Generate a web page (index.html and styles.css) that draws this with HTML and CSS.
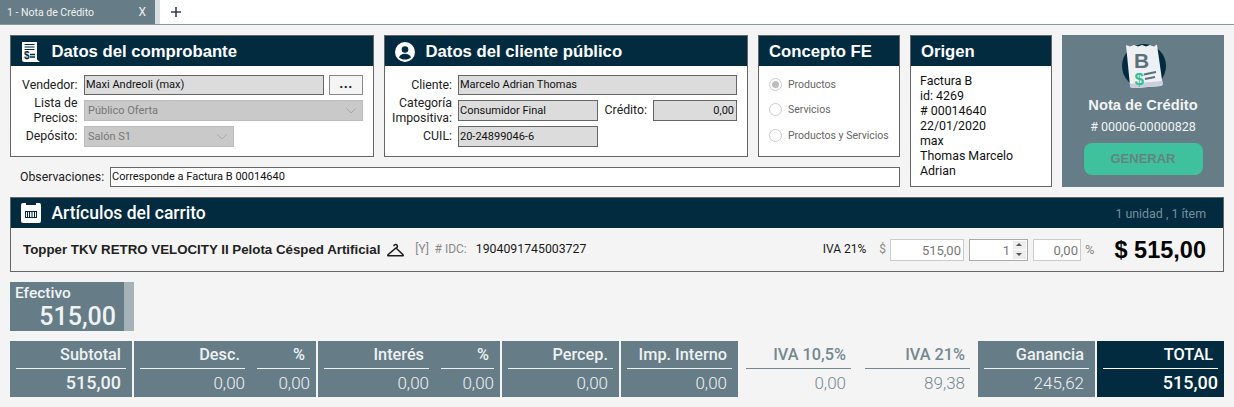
FILE: index.html
```html
<!DOCTYPE html>
<html lang="es">
<head>
<meta charset="utf-8">
<title>Nota de Crédito</title>
<link rel="stylesheet" href="styles.css">
</head>
<body>
<nav class="tabbar">
  <div class="tab"><span>1 - Nota de Crédito</span><span class="tab-x">X</span></div>
  <div class="tab-edge"></div>
  <svg class="tab-plus" width="10" height="10" viewBox="0 0 10 10"><path d="M5 0v10M0 5h10" stroke="#33424a" stroke-width="1.6"/></svg>
</nav>
<main class="page">
  <section class="top">
    <div class="panel p-comp">
      <header class="phead">
        <svg class="hicon" width="20" height="20" viewBox="0 0 20 20"><path d="M1 0h15v17.5l3 2.5H3.500Q1 20 1 17.500z" fill="#fff"/><path d="M3.500 2.500h10M3.500 5h10M3.500 7.500h10" stroke="#022b40" stroke-width="1.200"/><text x="3" y="17" class="icon-dollar">$</text><path d="M9 12.500h5M9 15h5" stroke="#022b40" stroke-width="1.500"/></svg>
        <h2>Datos del comprobante</h2>
      </header>
      <div class="form form-comp">
        <label>Vendedor:</label>
        <div class="field">Maxi Andreoli (max)</div>
        <button class="dots">...</button>
        <label class="two">Lista de Precios:</label>
        <div class="select wide">Público Oferta<svg width="10" height="6" viewBox="0 0 10 6"><path d="M.5.500 5 5 9.500.500" fill="none" stroke="#a8a8a8"/></svg></div>
        <label>Depósito:</label>
        <div class="select short">Salón S1<svg width="10" height="6" viewBox="0 0 10 6"><path d="M.5.500 5 5 9.500.500" fill="none" stroke="#a8a8a8"/></svg></div>
      </div>
    </div>
    <div class="panel p-client">
      <header class="phead">
        <svg class="hicon" width="20" height="20" viewBox="0 0 20 20"><circle cx="10" cy="10" r="10" fill="#fff"/><circle cx="10" cy="7.500" r="3.300" fill="#022b40"/><path d="M4 15.500c.8-2.600 3-3.700 6-3.700s5.200 1.100 6 3.700c-1.500 1.300-3.600 2.100-6 2.100s-4.500-.8-6-2.100z" fill="#022b40"/></svg>
        <h2>Datos del cliente público</h2>
      </header>
      <div class="form form-client">
        <label>Cliente:</label>
        <div class="field span3">Marcelo Adrian Thomas</div>
        <label class="two">Categoría Impositiva:</label>
        <div class="field tall">Consumidor Final</div>
        <label>Crédito:</label>
        <div class="field tall right">0,00</div>
        <label>CUIL:</label>
        <div class="field tall">20-24899046-6</div>
      </div>
    </div>
    <div class="panel p-concept">
      <header class="phead"><h2>Concepto FE</h2></header>
      <ul class="radios">
        <li><span class="radio on"></span>Productos</li>
        <li><span class="radio"></span>Servicios</li>
        <li><span class="radio"></span>Productos y Servicios</li>
      </ul>
    </div>
    <div class="panel p-origin">
      <header class="phead"><h2>Origen</h2></header>
      <div class="origin">Factura B<br>id: 4269<br># 00014640<br>22/01/2020<br>max<br>Thomas Marcelo<br>Adrian</div>
    </div>
    <aside class="p-nota">
      <svg class="nota-icon" width="44" height="44" viewBox="0 0 44 44">
        <circle cx="22" cy="22" r="22" fill="#022b40"/>
        <path d="M4 1l4 1.500 4-1.500 4 1.500 4-1.500 4 1.500 4-1.500 4 1.500 3-2 5.500 39q.5 2-2 2.500l-27 2.500q-3 .5-3.500-3z" fill="#eef1f4"/>
        <path d="M7.800 38q1 2 3 1.700l29.500-2.700.7 3q.3 1.500-2 2l-28 2.500q-2.500 0-3-3z" fill="#c9cfdc"/>
        <text x="12" y="24" class="nota-b">B</text>
        <text x="12.500" y="41" class="nota-s">$</text>
        <path d="M22 30.500l12-2.500M23 35l10-2" stroke="#5d7079" stroke-width="2.200"/>
      </svg>
      <div class="nota-title">Nota de Crédito</div>
      <div class="nota-num"># 00006-00000828</div>
      <button class="gen">GENERAR</button>
    </aside>
    <div class="obs">
      <label>Observaciones:</label>
      <div class="obs-input">Corresponde a Factura B 00014640</div>
    </div>
  </section>

  <section class="cart">
    <header class="cart-head">
      <svg class="hicon" width="20" height="20" viewBox="0 0 20 20"><path d="M2 0h3v2h10V0h3q2 0 2 2v16q0 2-2 2H2q-2 0-2-2V2q0-2 2-2z" fill="#fff"/><path d="M4 8h12v7H4z" fill="#022b40"/><path d="M5.500 9v5M7.500 9v5M9.500 9v5M11 9v5M12.500 9v5M14.500 9v5" stroke="#fff"/></svg>
      <h2>Artículos del carrito</h2>
      <span class="cart-count">1 unidad , 1 ítem</span>
    </header>
    <div class="cart-row">
      <strong class="item-name">Topper TKV RETRO VELOCITY II Pelota Césped Artificial</strong>
      <svg class="hanger" width="17" height="14" viewBox="0 0 17 14"><path d="M6.800 3.200A1.800 1.800 0 1 1 9 5L1 11.800q-.6 1 .5 1h14q1.100 0 .5-1L9 5" fill="none" stroke="#1c1c1c" stroke-width="1.500"/></svg>
      <span class="muted tag">[Y]</span>
      <span class="muted idc"># IDC:</span>
      <span class="idcode">1904091745003727</span>
      <span class="iva">IVA 21%</span>
      <span class="muted sym">$</span>
      <div class="num w-price">515,00</div>
      <div class="stepper"><span class="step-val">1</span><span class="step-btns"><i class="up"></i><i class="down"></i></span></div>
      <div class="num w-pct">0,00</div>
      <span class="muted pct">%</span>
      <strong class="line-total">$ 515,00</strong>
    </div>
  </section>

  <section class="pay">
    <div class="pay-main"><div class="pay-label">Efectivo</div><div class="pay-val">515,00</div></div>
    <div class="pay-bar"></div>
  </section>

  <section class="totals">
    <div class="tcell w-122 padv"><div class="tcol grow"><b>Subtotal</b><strong>515,00</strong></div></div>
    <div class="tcell w-182"><div class="tcol grow"><b>Desc.</b><span>0,00</span></div><div class="tcol w53"><b>%</b><span>0,00</span></div></div>
    <div class="tcell w-182"><div class="tcol grow"><b>Interés</b><span>0,00</span></div><div class="tcol w53"><b>%</b><span>0,00</span></div></div>
    <div class="tcell w-117 padv"><div class="tcol grow"><b>Percep.</b><span>0,00</span></div></div>
    <div class="tcell w-117 padv"><div class="tcol grow"><b>Imp. Interno</b><span>0,00</span></div></div>
    <div class="tcell w-117 plain padv"><div class="tcol grow"><b>IVA 10,5%</b><span>0,00</span></div></div>
    <div class="tcell w-117 plain padv"><div class="tcol grow"><b>IVA 21%</b><span>89,38</span></div></div>
    <div class="tcell w-117 padv"><div class="tcol grow"><b>Ganancia</b><span>245,62</span></div></div>
    <div class="tcell w-127 dark"><div class="tcol grow"><b>TOTAL</b><strong>515,00</strong></div></div>
  </section>
</main>
</body>
</html>
```
FILE: styles.css
```css
* { box-sizing: border-box; }
html, body { margin: 0; padding: 0; }
body { width: 1234px; height: 407px; overflow: hidden; background: #f4f4f4; font: 12px/15px Roboto, "Liberation Sans", sans-serif; color: #1a1a1a; }

.tabbar { height: 25px; background: #fff; border-bottom: 1px solid #8b989e; display: flex; align-items: center; }
.tab { width: 155px; height: 24px; background: #667c86; color: #eef1f2; display: flex; align-items: center; justify-content: space-between; padding: 0 9px 0 7px; font-size: 10.500px; }
.tab-x { font-size: 12px; }
.tab-edge { width: 5px; height: 24px; background: #d8dee1; }
.tab-plus { margin-left: 11px; }

.page { padding: 10px 10px 0; }
.top { display: grid; grid-template-columns: 364px 364px 142px 142px 162px; grid-template-rows: 122px 20px; column-gap: 10px; row-gap: 10px; }
.panel { border: 1px solid #666; background: #fff; }
.p-comp { grid-column: 1; grid-row: 1; }
.p-client { grid-column: 2; grid-row: 1; }
.p-concept { grid-column: 3; grid-row: 1; }
.p-origin { grid-column: 4; grid-row: 1 / span 2; }
.p-nota { grid-column: 5; grid-row: 1 / span 2; }
.phead { height: 30px; background: #022b40; color: #fff; display: flex; align-items: center; padding: 1px 0 0 10px; }
.phead h2 { margin: 0; font: 700 16.700px/22px "Liberation Sans", Arial, sans-serif; white-space: nowrap; }
.hicon { flex: none; margin-right: 10.500px; }

.form { display: grid; column-gap: 5px; row-gap: 5px; padding-top: 9px; align-items: center; }
.form-comp { grid-template-columns: 68px 240px 34px; grid-template-rows: 20px 21px 21px; }
.form-client { grid-template-columns: 68px 140px 45px 84px; grid-template-rows: 20px 21px 21px; }
.form label { text-align: right; padding-right: 1.500px; color: #222; font-size: 12.300px; white-space: normal; }
.form-client label { padding-right: 1px; }
.form .two { line-height: 15px; }
.field { height: 100%; background: #dcdcdc; border: 1px solid #666; padding: 1px 1px; font-size: 11px; line-height: 15px; color: #111; white-space: nowrap; }
.tall { padding-top: 2px; }
.right { text-align: right; padding-right: 2px; }
.span3 { grid-column: 2 / span 3; }
.dots { height: 20px; padding: 0 0 5px; background: #f4f4f4; border: 1px solid #888; font: 700 14px/14px Roboto, sans-serif; color: #222; letter-spacing: .5px; }
.select { height: 100%; background: #c9c9c9; border: 1px solid #bcbcbc; color: #777; font-size: 11px; padding: 3px 6px 3px 3px; display: flex; justify-content: space-between; align-items: center; }
.wide { grid-column: 2 / span 2; }
.short { width: 150px; }

.radios { list-style: none; margin: 0; padding: 6px 0 0 10px; color: #666; font-size: 10.500px; }
.radios li { height: 25.300px; display: flex; align-items: center; white-space: nowrap; }
.radio { width: 13px; height: 13px; border: 1px solid #ccc; border-radius: 50%; background: #fff; margin-right: 6px; position: relative; flex: none; }
.radio.on::after { content: ""; position: absolute; left: 2px; top: 2px; width: 7px; height: 7px; border-radius: 50%; background: #bdbdbd; }

.origin { padding: 7px 9px 0; color: #111; font-size: 12.400px; }

.p-nota { background: #667c86; display: flex; flex-direction: column; align-items: center; padding-top: 9px; color: #fff; }
.nota-icon { flex: none; margin-left: 1px; }
.icon-dollar { font: 700 10px "Liberation Sans", sans-serif; fill: #022b40; }
.nota-b { font: 700 21px "Liberation Sans", sans-serif; fill: #5d7079; }
.nota-s { font: 700 17px "Liberation Sans", sans-serif; fill: #37bd94; }
.nota-title { margin-top: 8px; font: 700 14.700px/18px "Liberation Sans", sans-serif; color: #f2f4f5; }
.nota-num { margin-top: 5px; font-size: 12.500px; line-height: 15px; color: #f2f4f5; }
.gen { margin-top: 9px; width: 119px; height: 32px; border: 0; border-radius: 8px; background: #3fc19e; color: #64847f; font: 700 13px/16px "Liberation Sans", sans-serif; }

.obs { grid-column: 1 / span 3; grid-row: 2; display: flex; align-items: center; padding-left: 10px; }
.obs label { width: 90px; flex: none; color: #222; font-size: 12.300px; white-space: nowrap; }
.obs-input { flex: 1; height: 20px; background: #fff; border: 1px solid #666; padding: 1px 1px; color: #111; font-size: 11px; }

.cart { margin-top: 10px; border: 1px solid #666; }
.cart-head { height: 30px; background: #022b40; color: #fff; display: flex; align-items: center; padding-left: 10px; }
.cart-head h2 { margin: 0; font: 500 17.500px/22px Roboto, sans-serif; }
.cart-count { margin-left: auto; margin-right: 17px; color: #76909c; font-size: 12.400px; }
.cart-row { height: 43px; display: flex; align-items: center; padding-left: 12px; }
.item-name { font: 700 13.300px/15px "Liberation Sans", sans-serif; color: #222; white-space: nowrap; }
.hanger { margin-left: 7px; flex: none; }
.muted { color: #8a8a8a; }
.tag { margin-left: 11px; }
.idc { margin-left: 5.500px; }
.idcode { margin-left: 9px; font-size: 12.300px; }
.iva { margin-left: auto; }
.sym { margin-left: 13px; }
.num { height: 22px; background: #fff; border: 1px solid #ccc; text-align: right; padding: 3px 2px; color: #777; font-size: 13px; }
.w-price { width: 74px; margin-left: 4px; }
.stepper { width: 59px; height: 22px; margin-left: 5px; background: #fff; border: 1px solid #aaa; display: flex; justify-content: flex-end; color: #777; font-size: 13px; }
.step-val { padding: 3px 2px 0 0; }
.step-btns { width: 15px; display: flex; flex-direction: column; gap: 1px; padding: 1px; }
.step-btns i { flex: 1; background: #ededed; position: relative; display: flex; align-items: center; justify-content: center; }
.step-btns i::after { content: ""; border-left: 3px solid transparent; border-right: 3px solid transparent; }
.up::after { border-bottom: 3px solid #555; }
.down::after { border-top: 3px solid #555; }
.w-pct { width: 48px; margin-left: 5px; }
.pct { margin-left: 4px; font-size: 13px; }
.line-total { margin-left: 20px; margin-right: 17px; font: 700 23.500px/26px "Liberation Sans", sans-serif; color: #050505; }

.pay { margin-top: 10px; height: 49px; width: 124px; display: flex; }
.pay-main { width: 114px; flex: none; background: #667c86; color: #f0f3f4; padding: 3px 8px 0 5px; }
.pay-label { font: 500 15.500px/16px Roboto, sans-serif; }
.pay-val { margin-top: 1px; text-align: right; font: 500 25px/29px Roboto, sans-serif; }
.pay-bar { width: 10px; flex: none; background: #a5b2b8; }

.totals { margin-top: 10px; height: 56px; display: flex; gap: 2px; }
.tcell { background: #667c86; color: #eef1f2; display: flex; gap: 12px; padding: 0 6px; flex: none; }
.w-122 { width: 122px; }
.w-182 { width: 182px; }
.w-117 { width: 117px; }
.w-127 { width: 127px; }
.tcell.plain { background: transparent; color: #748891; }
.tcell.dark { background: #022b40; color: #fff; }
.tcol { display: flex; flex-direction: column; text-align: right; }
.grow { flex: 1; }
.w53 { width: 53px; flex: none; }
.tcol b { display: block; height: 28px; border-bottom: 1px solid currentColor; font: 500 16.300px/28px Roboto, sans-serif; padding-right: 5px; white-space: nowrap; }
.tcol span, .tcol strong { display: block; font: 300 17px/28px Roboto, sans-serif; }
.tcol strong { font-weight: 500; font-size: 18px; }
.padv span, .padv strong { padding-right: 5px; }
```
